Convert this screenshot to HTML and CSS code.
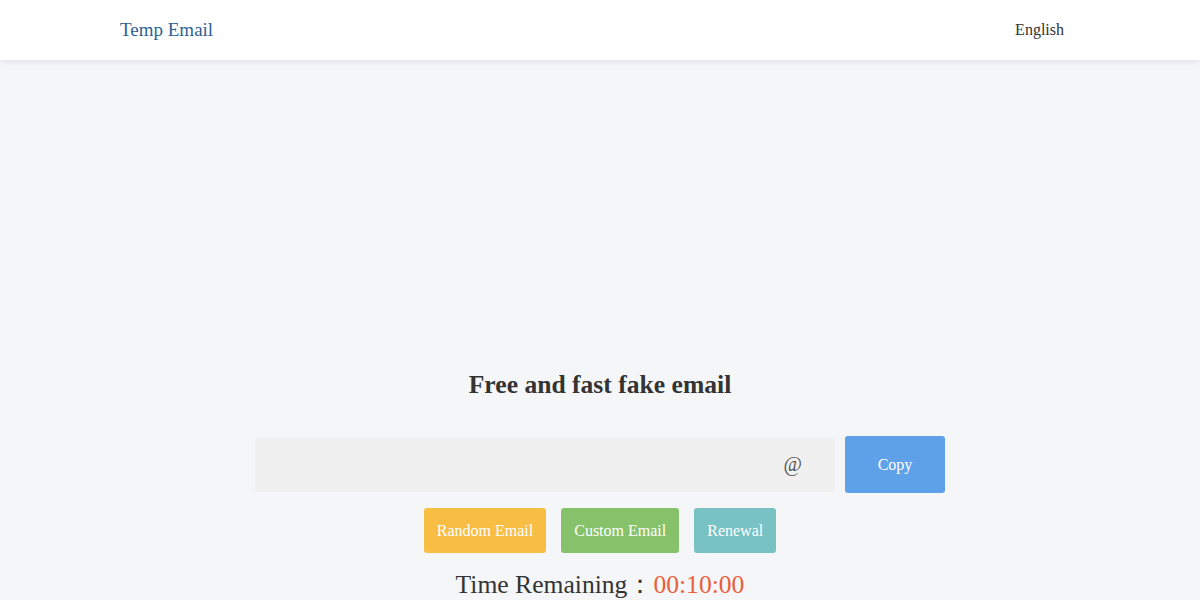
FILE: index.html
```html
<!DOCTYPE html>
<html lang="en">
<head>
    <meta charset="UTF-8">
    <title>Temp Email</title>
    <link rel="stylesheet" href="styles.css">
</head>
<body>
    <header class="topbar">
        <div class="topbar-inner">
            <a href="#" class="logo">Temp Email</a>
            <a href="#" class="lang">English</a>
        </div>
    </header>

    <main class="main">
        <div class="ad-space"></div>
        <h1 class="title">Free and fast fake email</h1>

        <div class="mail-row">
            <div class="mail-box">
                <input type="text" class="mail-name" value="">
                <span class="mail-at">@</span>
            </div>
            <button class="btn btn-copy">Copy</button>
        </div>

        <div class="actions">
            <button class="btn btn-random">Random Email</button>
            <button class="btn btn-custom">Custom Email</button>
            <button class="btn btn-renew">Renewal</button>
        </div>

        <p class="timer">Time Remaining：<span class="time">00:10:00</span></p>
    </main>
</body>
</html>
```

FILE: styles.css
```css
body {
    margin: 0;
    font-family: "Liberation Serif", "Times New Roman", serif;
    background-color: #f5f6f8;
    color: #333;
}

.topbar {
    background-color: #fff;
    height: 60px;
    box-shadow: 0 2px 6px rgba(0, 0, 0, 0.08);
    position: relative;
}

.topbar-inner {
    width: 944px;
    margin-left: 120px;
    height: 60px;
    display: flex;
    align-items: center;
    justify-content: space-between;
}

.logo {
    color: #2f6391;
    font-size: 19px;
    text-decoration: none;
}

.lang {
    color: #333;
    font-size: 16px;
    text-decoration: none;
}

.main {
    display: flex;
    flex-direction: column;
    align-items: center;
}

.ad-space {
    height: 308px;
}

.title {
    font-size: 25.6px;
    font-weight: bold;
    margin: 0 0 34px;
    line-height: 34px;
}

.mail-row {
    display: flex;
    align-items: center;
    gap: 10px;
}

.mail-box {
    width: 580px;
    height: 54px;
    background-color: #f0f0f0;
    border-radius: 3px;
    display: flex;
    align-items: center;
}

.mail-name {
    flex: 1;
    border: none;
    background: transparent;
    height: 100%;
    padding: 0 15px;
    outline: none;
    font-family: inherit;
    font-size: 18px;
}

.mail-at {
    font-size: 20px;
    color: #555;
    margin-right: 33px;
}

.btn {
    border: none;
    border-radius: 3px;
    color: #fff;
    font-family: inherit;
    font-size: 16px;
    cursor: pointer;
}

.btn-copy {
    width: 100px;
    height: 57px;
    background-color: #5fa1e8;
}

.actions {
    display: flex;
    gap: 15px;
    margin-top: 15px;
}

.actions .btn {
    height: 45px;
    padding: 0 13px;
}

.btn-random {
    background-color: #f8bd43;
}

.btn-custom {
    background-color: #86c26a;
}

.btn-renew {
    background-color: #78c2c4;
}

.timer {
    font-size: 25.6px;
    margin: 16px 0 0;
    line-height: 32px;
}

.time {
    color: #e8603c;
}
```
